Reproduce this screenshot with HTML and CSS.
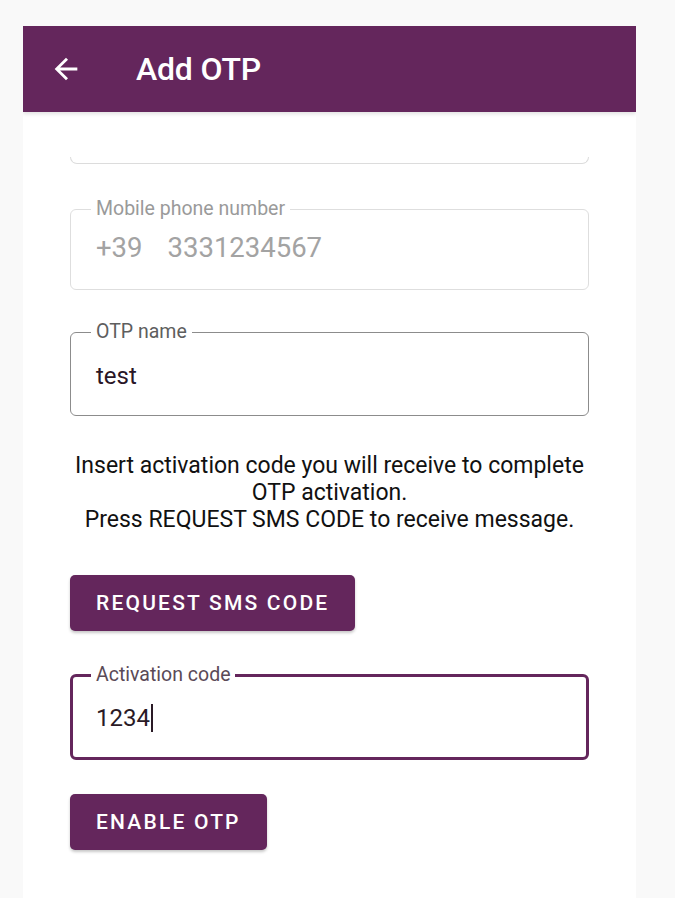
FILE: index.html
```html
<!DOCTYPE html>
<html>
<head>
<meta charset="utf-8">
<link rel="stylesheet" href="styles.css">
</head>
<body>
<div class="screen">
  <header class="appbar">
    <svg class="back" viewBox="0 0 24 24" width="34" height="34"><path fill="#fff" d="M20 11H7.83l5.59-5.59L12 4l-8 8 8 8 1.41-1.41L7.83 13H20v-2z"/></svg>
    <h1 class="title">Add OTP</h1>
  </header>
  <main class="content">
    <div class="clipped-field"></div>
    <fieldset class="field field-disabled">
      <legend class="label">Mobile phone number</legend>
      <div class="value value-phone"><span class="prefix">+39</span><span>3331234567</span></div>
    </fieldset>
    <fieldset class="field field-normal">
      <legend class="label">OTP name</legend>
      <div class="value value-text">test</div>
    </fieldset>
    <p class="info">Insert activation code you will receive to complete OTP activation.<br>Press REQUEST SMS CODE to receive message.</p>
    <div class="btn-row"><button class="btn">REQUEST SMS CODE</button></div>
    <fieldset class="field field-focused">
      <legend class="label">Activation code</legend>
      <div class="value value-text value-code">1234<span class="caret"></span></div>
    </fieldset>
    <div class="btn-row btn-row-last"><button class="btn">ENABLE OTP</button></div>
  </main>
</div>
</body>
</html>
```

FILE: styles.css
```css
html, body {
  margin: 0;
  padding: 0;
  background: #f9f9f9;
  font-family: Roboto, "Noto Sans", sans-serif;
}
body {
  padding-top: 26px;
}
.screen {
  margin-left: 23px;
  width: 613px;
  height: 872px;
  background: #fff;
  overflow: hidden;
}
.appbar {
  height: 86px;
  background: #64265c;
  display: flex;
  align-items: center;
  padding-left: 26px;
  box-shadow: 0 2px 4px rgba(0,0,0,0.12);
  position: relative;
  z-index: 1;
}
.back {
  display: block;
}
.title {
  margin: 0 0 0 53px;
  color: #fff;
  font-size: 32px;
  font-weight: 500;
  letter-spacing: -0.2px;
}
.content {
  padding: 0 47px;
}
.clipped-field {
  height: 6px;
  margin-top: 45px;
  border: 1px solid #dcdcdc;
  border-top: none;
  border-radius: 0 0 7px 7px;
}
.field {
  box-sizing: border-box;
  margin: 0;
  padding: 0 24px 0 20px;
  border-radius: 6px;
  min-width: 0;
}
.field-disabled {
  margin-top: 34px;
  height: 92px;
  border: 1px solid #dedede;
}
.field-normal {
  margin-top: 31px;
  height: 95px;
  border: 1px solid #8c8c8c;
}
.field-focused {
  margin-top: 33px;
  height: 96px;
  border: 3px solid #64265c;
  padding-left: 18px;
}
.label {
  padding: 0 5px;
  font-size: 19.5px;
  line-height: 22px;
  color: #9a9a9a;
}
.field-normal .label { color: #5e5e5e; }
.field-focused .label { color: #5a4a57; }
.value {
  padding-left: 5px;
}
.value-phone {
  margin-top: 12px;
  font-size: 27.5px;
  line-height: 32px;
  color: #a3a3a3;
  display: flex;
  gap: 25px;
}
.value-text {
  margin-top: 19px;
  font-size: 24px;
  line-height: 28px;
  color: #2a1626;
}
.value-code {
  margin-top: 18px;
  display: flex;
  align-items: center;
  color: #2a1a26;
}
.caret {
  display: inline-block;
  width: 2px;
  height: 28px;
  background: #2a1a26;
  margin-left: 1px;
}
.info {
  margin: 36px 0 0 0;
  text-align: center;
  font-size: 23px;
  line-height: 27px;
  color: #111;
}
.btn-row {
  margin-top: 42px;
  display: flex;
}
.btn-row-last {
  margin-top: 34px;
}
.btn {
  height: 56px;
  padding: 0 26px;
  background: #64265c;
  color: #fff;
  border: none;
  border-radius: 5px;
  font-family: Roboto, "Noto Sans", sans-serif;
  font-size: 21px;
  font-weight: 500;
  letter-spacing: 2.2px;
  box-shadow: 0 2px 3px rgba(0,0,0,0.22);
}
```
